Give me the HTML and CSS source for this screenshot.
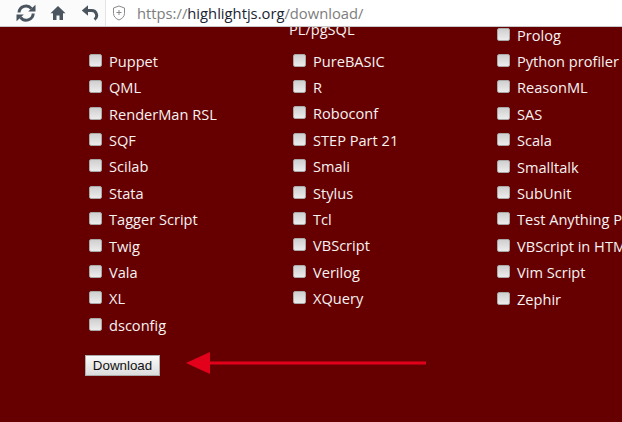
FILE: index.html
```html
<!DOCTYPE html>
<html lang="en">
<head>
<meta charset="utf-8">
<title>highlight.js download</title>
<link rel="stylesheet" href="styles.css">
</head>
<body>
<header class="toolbar">
  <div class="nav">
    <svg class="icon reload" viewBox="0 0 20 20" width="20" height="20"><path d="M3 9.500A7 7 0 0 1 15.400 5.600" fill="none" stroke="#4a5560" stroke-width="3"/><path d="M17.200 10.500A7 7 0 0 1 4.600 14.400" fill="none" stroke="#4a5560" stroke-width="3"/><path d="M12.200 8.600H19.500V1.800z" fill="#4a5560"/><path d="M7.800 11.400H0.500v6.800z" fill="#4a5560"/></svg>
    <svg class="icon home" viewBox="0 0 16 16" width="16" height="16"><path d="M8 1 0.500 8.200H3V15H6.500V10.500H9.500V15H13V8.200H15.500z" fill="#4a5560"/></svg>
    <svg class="icon back" viewBox="0 0 18 18" width="18" height="18"><path d="M5 6.500H10.500A5 5 0 0 1 13.500 15.600" fill="none" stroke="#4a5560" stroke-width="3"/><path d="M7 1.200V11.800L0.800 6.500z" fill="#4a5560"/></svg>
  </div>
  <div class="address">
    <svg class="shield" viewBox="0 0 14 16" width="14" height="16"><path d="M7 1 1.500 3V8.500C1.500 11.500 4 13.800 7 15C10 13.800 12.500 11.500 12.500 8.500V3z" fill="#fff" stroke="#8a8a8a"/><path d="M7 5V10M4.500 7.500H9.500" stroke="#8a8a8a" fill="none"/></svg>
    <span class="url">https://<b class="domain">highlightjs.org</b>/download/</span>
  </div>
</header>
<main class="page">
  <div class="columns">
    <ul class="col col-a">
      <li><label><input type="checkbox">Puppet</label></li>
      <li><label><input type="checkbox">QML</label></li>
      <li><label><input type="checkbox">RenderMan RSL</label></li>
      <li><label><input type="checkbox">SQF</label></li>
      <li><label><input type="checkbox">Scilab</label></li>
      <li><label><input type="checkbox">Stata</label></li>
      <li><label><input type="checkbox">Tagger Script</label></li>
      <li><label><input type="checkbox">Twig</label></li>
      <li><label><input type="checkbox">Vala</label></li>
      <li><label><input type="checkbox">XL</label></li>
      <li><label><input type="checkbox">dsconfig</label></li>
    </ul>
    <ul class="col col-b">
      <li class="clipped">PL/pgSQL</li>
      <li><label><input type="checkbox">PureBASIC</label></li>
      <li><label><input type="checkbox">R</label></li>
      <li><label><input type="checkbox">Roboconf</label></li>
      <li><label><input type="checkbox">STEP Part 21</label></li>
      <li><label><input type="checkbox">Smali</label></li>
      <li><label><input type="checkbox">Stylus</label></li>
      <li><label><input type="checkbox">Tcl</label></li>
      <li><label><input type="checkbox">VBScript</label></li>
      <li><label><input type="checkbox">Verilog</label></li>
      <li><label><input type="checkbox">XQuery</label></li>
    </ul>
    <ul class="col col-c">
      <li><label><input type="checkbox">Prolog</label></li>
      <li><label><input type="checkbox">Python profiler</label></li>
      <li><label><input type="checkbox">ReasonML</label></li>
      <li><label><input type="checkbox">SAS</label></li>
      <li><label><input type="checkbox">Scala</label></li>
      <li><label><input type="checkbox">Smalltalk</label></li>
      <li><label><input type="checkbox">SubUnit</label></li>
      <li><label><input type="checkbox">Test Anything Protocol</label></li>
      <li><label><input type="checkbox">VBScript in HTML</label></li>
      <li><label><input type="checkbox">Vim Script</label></li>
      <li><label><input type="checkbox">Zephir</label></li>
    </ul>
  </div>
  <div class="actions">
    <button class="download" type="button">Download</button>
    <svg class="arrow" viewBox="0 0 240 22" width="240" height="22"><path d="M240 9.500H24V0L0 11 24 22V12.500H240z" fill="#e2001a"/></svg>
  </div>
</main>
</body>
</html>
```
FILE: styles.css
```css
* { box-sizing: border-box; }
html, body { margin: 0; height: 100%; overflow: hidden; }
body { font-family: "Open Sans", sans-serif; background: #660000; }

.toolbar {
  display: flex;
  height: 27px;
  background: #fbfbfb;
  border-bottom: 1px solid #c8c8c8;
}
.nav {
  display: flex;
  align-items: center;
  width: 106px;
  border-right: 1px solid #e4e4e4;
  padding-left: 16px;
  gap: 14px;
}
.back { margin-left: 1px; }
.address {
  flex: 1;
  display: flex;
  align-items: center;
  gap: 11px;
  padding-left: 6px;
  background: #fff;
}
.url { font-size: 14.750px; color: #7d7d7d; white-space: nowrap; }
.domain { font-weight: 400; color: #1a2433; }

.page {
  height: 395px;
  overflow: hidden;
  color: #f4f2f2;
  font-size: 14.600px;
}
.columns {
  display: grid;
  grid-template-columns: 204px 204px 204px;
  padding-left: 89px;
  height: 312px;
  overflow: hidden;
}
.col { list-style: none; margin: 0; padding: 0; white-space: nowrap; overflow: visible; }
.col-a { padding-top: 20.700px; }
.col-b { margin-top: -17.500px; }
.col-c { margin-top: -5.500px; }
.col li { height: 26.400px; display: flex; align-items: center; }
.col li.clipped { height: 38px; margin-left: -4px; }
label { display: flex; align-items: center; }
input[type="checkbox"] {
  appearance: none;
  width: 13px;
  height: 13px;
  margin: -1px 7px 0 0;
  flex: none;
  background: linear-gradient(#cfcfcf, #ececec);
  border: 1px solid #a8a8a8;
  border-radius: 2px;
}
.actions {
  display: flex;
  align-items: flex-start;
  padding: 16px 0 0 85px;
}
.download {
  width: 75px;
  height: 21px;
  padding: 0;
  font: 13.330px "Liberation Sans", sans-serif;
  color: #111;
  background: linear-gradient(#fafafa, #dcdcdc);
  border: 1px solid #aaa;
}
.arrow { margin-left: 26px; margin-top: -3px; flex: none; }
```
